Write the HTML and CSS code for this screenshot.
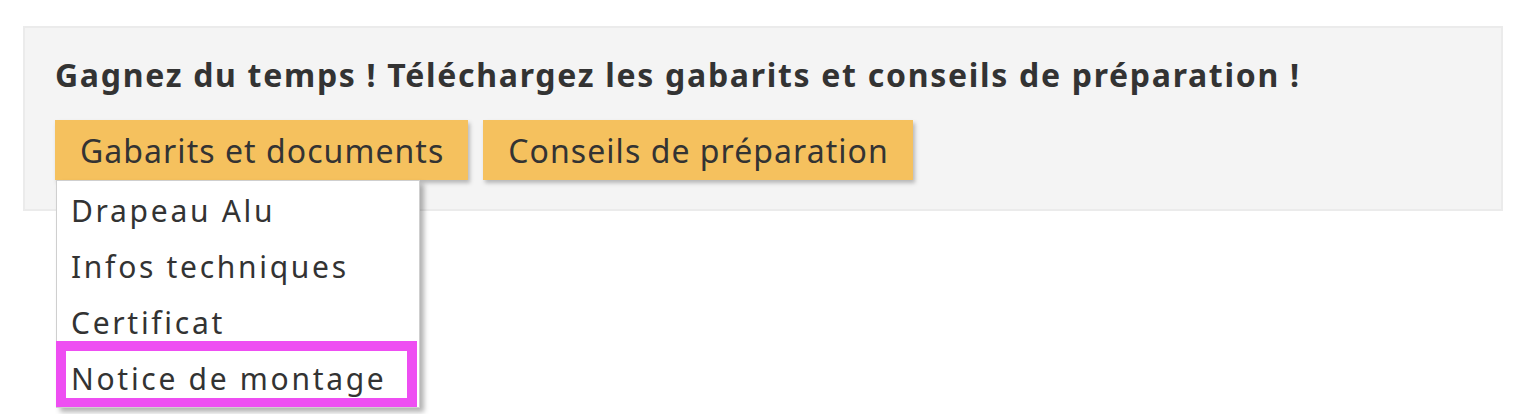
FILE: index.html
```html
<!DOCTYPE html>
<html lang="fr">
<head>
  <meta charset="UTF-8" />
  <meta name="viewport" content="width=device-width, initial-scale=1" />
  <title>Gabarits et conseils</title>
  <link rel="stylesheet" href="styles.css">
</head>
<body>
  <div class="bloc-aide">
    <h2>Gagnez du temps ! Téléchargez les gabarits et conseils de préparation !</h2>
    <div class="boutons">
      <div class="menu">
        <button class="btn-jaune">Gabarits et documents</button>
        <ul class="liste">
          <li><a href="#">Drapeau Alu</a></li>
          <li><a href="#">Infos techniques</a></li>
          <li><a href="#">Certificat</a></li>
          <li class="actif"><a href="#">Notice de montage</a></li>
        </ul>
      </div>
      <button class="btn-jaune">Conseils de préparation</button>
    </div>
  </div>
</body>
</html>
```

FILE: styles.css
```css
html, body {
  min-height: 100vh;
}
body {
  margin: 0;
  font-family: "Noto Sans", Arial, sans-serif;
  color: #333;
  background: #fff;
}
.bloc-aide {
  margin: 26px 25px 0 23px;
  height: 185px;
  box-sizing: border-box;
  background: #f4f4f4;
  border: 2px solid #ebebeb;
  padding: 27px 30px 0;
}
h2 {
  margin: 0 0 25px;
  font-size: 32px;
  font-weight: 700;
  line-height: 40px;
  letter-spacing: 1.7px;
}
.boutons {
  display: flex;
  gap: 15px;
}
.menu {
  position: relative;
}
.btn-jaune {
  display: block;
  background: #f5c15e;
  color: #333;
  border: none;
  height: 60px;
  padding: 0 24px 0 25px;
  font-family: inherit;
  font-size: 32px;
  letter-spacing: 1.05px;
  box-shadow: 2px 3px 4px rgba(0, 0, 0, 0.25);
  cursor: pointer;
}
.liste {
  position: absolute;
  top: 60px;
  left: 1px;
  width: 362px;
  margin: 0;
  padding: 2px 0 0;
  list-style: none;
  background: #fff;
  border: 1px solid #cfcfcf;
  box-shadow: 4px 4px 5px rgba(0, 0, 0, 0.3);
}
.liste li {
  position: relative;
}
.liste li a {
  display: block;
  padding: 0 14px;
  font-size: 30px;
  line-height: 56px;
  letter-spacing: 2.7px;
  color: #333;
  text-decoration: none;
}
.liste li.actif::after {
  content: "";
  position: absolute;
  top: -10px;
  left: -1px;
  right: 2px;
  bottom: 0;
  border: 10px solid #ee4ef2;
  border-bottom-width: 9px;
  pointer-events: none;
}
```
